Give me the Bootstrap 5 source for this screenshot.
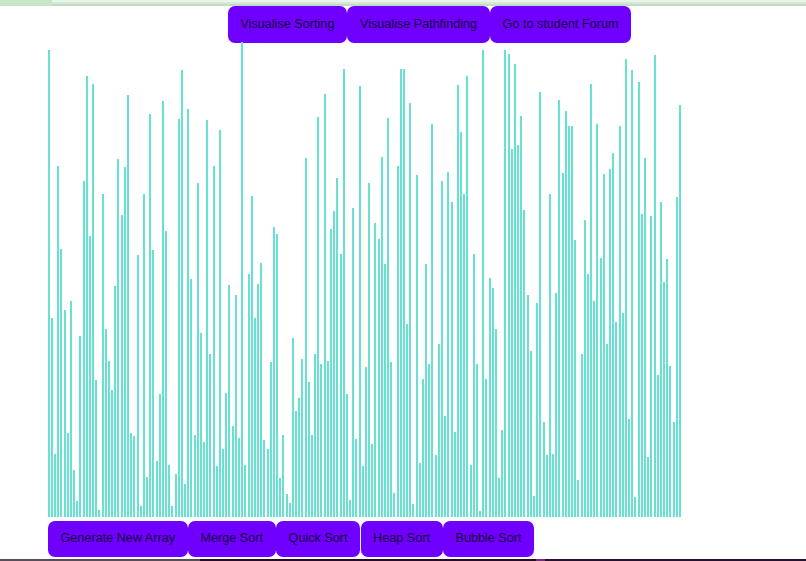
<!DOCTYPE html>
<html lang="en">
<head>
<meta charset="utf-8">
<title>Sorting Visualiser</title>
<link href="https://cdn.jsdelivr.net/npm/bootstrap@5.3.0/dist/css/bootstrap.min.css" rel="stylesheet">
<style>
html, body { height: 100%; overflow: hidden; background: #fff; }
.chrome-strip { height: 6px; background: #c6e0c6; }
.chrome-tab { width: 52px; background: #c8e6c9; }
.chrome-bar { background: linear-gradient(#eaf4ea 0, #eaf4ea 2px, #d6e8d6 2px, #d6e8d6 4px, #c2dcc2 4px); }
.top-actions { padding-left: 228px; }
.bottom-actions { padding-left: 48px; margin-top: 3.5px; }
.btn-viz {
  --bs-btn-bg: #6f00ff; --bs-btn-border-color: #6f00ff; --bs-btn-color: #16003a;
  --bs-btn-hover-bg: #6f00ff; --bs-btn-hover-border-color: #6f00ff; --bs-btn-hover-color: #16003a;
  --bs-btn-font-family: "Liberation Sans", Arial, sans-serif;
  --bs-btn-font-size: 12.65px; --bs-btn-line-height: 1.2;
  --bs-btn-border-radius: 7px; --bs-btn-border-width: 0;
  --bs-btn-padding-x: 12.5px; --bs-btn-padding-y: 0;
  height: 36.5px; margin-right: .5px; white-space: nowrap;
}
.bar-field { height: 474.5px; padding-left: 47.7px; gap: 1.172px; }
.bar-item { width: 2px; flex: none; background: #6be0d0; box-shadow: 0 0 1px rgba(175, 250, 240, .7); }
.foot-strip { height: 2px; margin-top: 2px; }
.foot-a { width: 200px; background: #5a4c5a; }
.foot-b { width: 336px; background: #2a0a2c; }
.foot-c { width: 9px; background: #7a2a7a; }
.foot-d { background: #2a1030; }
</style>
</head>
<body>
<div class="chrome-strip d-flex">
  <div class="chrome-tab"></div>
  <div class="chrome-bar flex-grow-1"></div>
</div>
<div class="top-actions d-flex">
  <button type="button" class="btn btn-viz">Visualise Sorting</button>
  <button type="button" class="btn btn-viz">Visualise Pathfinding</button>
  <button type="button" class="btn btn-viz">Go to student Forum</button>
</div>
<div class="bar-field d-flex align-items-end" id="bars"></div>
<div class="bottom-actions d-flex">
  <button type="button" class="btn btn-viz">Generate New Array</button>
  <button type="button" class="btn btn-viz">Merge Sort</button>
  <button type="button" class="btn btn-viz">Quick Sort</button>
  <button type="button" class="btn btn-viz">Heap Sort</button>
  <button type="button" class="btn btn-viz">Bubble Sort</button>
</div>
<div class="foot-strip d-flex">
  <div class="foot-a"></div><div class="foot-b"></div><div class="foot-c"></div><div class="foot-d flex-grow-1"></div>
</div>
<script>
var tops = [30,832,1240,376,625,810,1178,782,1288,1383,886,423,107,588,132,1020,1410,462,865,963,1050,738,357,523,380,165,1178,1188,645,1397,462,1310,222,630,1262,1062,181,573,1275,1398,
1302,237,88,1332,205,716,1183,427,877,1204,238,940,376,1278,270,1226,1057,735,1157,763,1193,5,1275,702,468,834,732,668,1200,1226,965,560,582,1312,1183,1360,1388,894,1112,1074,
955,354,1024,1183,940,229,972,162,963,567,512,412,642,86,1062,1380,504,1195,137,1278,980,427,1210,547,595,350,670,232,965,1358,376,86,86,851,188,1390,403,1268,1017,670,970,
250,1245,912,421,1128,396,486,1176,134,274,462,108,1275,640,970,1412,30,1017,713,742,867,1312,1168,30,42,326,72,315,227,510,763,932,1368,789,156,1146,1245,462,1240,758,
180,398,212,258,256,598,1318,940,538,702,132,782,250,652,400,910,386,338,844,258,818,57,1136,88,1370,124,522,352,1250,528,45,1003,486,725,656,977,1146,471,194];
var field = document.getElementById('bars');
tops.forEach(function (y) {
  var d = document.createElement('div');
  d.className = 'bar-item';
  d.style.height = ((1430 - y) / 3).toFixed(1) + 'px';
  field.appendChild(d);
});
</script>
<script src="https://cdn.jsdelivr.net/npm/bootstrap@5.3.0/dist/js/bootstrap.bundle.min.js"></script>
</body>
</html>
